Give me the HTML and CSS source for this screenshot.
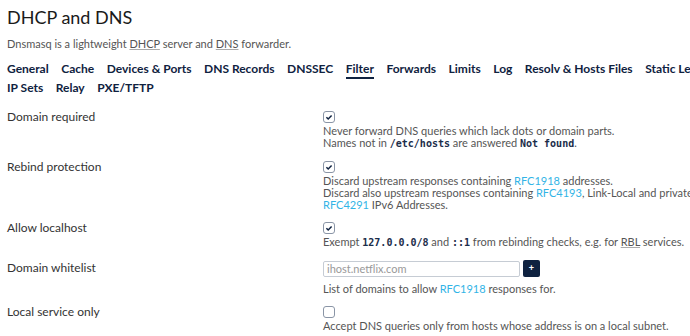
FILE: index.html
```html
<!DOCTYPE html>
<html lang="en">

<head>
    <meta charset="UTF-8">
    <title>DHCP and DNS</title>
    <link rel="stylesheet" href="styles.css">
</head>

<body>
    <div class="page">
        <h1>DHCP and DNS</h1>
        <p class="intro">Dnsmasq is a lightweight <abbr>DHCP</abbr> server and <abbr>DNS</abbr> forwarder.</p>

        <!-- Section tabs -->
        <ul class="tabs">
            <li>General</li>
            <li>Cache</li>
            <li>Devices &amp; Ports</li>
            <li>DNS Records</li>
            <li>DNSSEC</li>
            <li class="active">Filter</li>
            <li>Forwards</li>
            <li>Limits</li>
            <li>Log</li>
            <li>Resolv &amp; Hosts Files</li>
            <li>Static Leases</li>
            <li>IP Sets</li>
            <li>Relay</li>
            <li>PXE/TFTP</li>
        </ul>

        <!-- Filter options -->
        <div class="options">
            <div class="option">
                <div class="label">Domain required</div>
                <div class="field">
                    <span class="check"><svg viewBox="0 0 10 10"><path d="M2.4 5.2l1.8 1.8 3.4-3.6"/></svg></span>
                    <div class="desc">Never forward DNS queries which lack dots or domain parts.<br>Names not in <code>/etc/hosts</code> are answered <code>Not found</code>.</div>
                </div>
            </div>

            <div class="option">
                <div class="label">Rebind protection</div>
                <div class="field">
                    <span class="check"><svg viewBox="0 0 10 10"><path d="M2.4 5.2l1.8 1.8 3.4-3.6"/></svg></span>
                    <div class="desc">Discard upstream responses containing <a href="#">RFC1918</a> addresses.<br>Discard also upstream responses containing <a href="#">RFC4193</a>, Link-Local and private <a href="#">RFC4291</a> IPv6 Addresses.</div>
                </div>
            </div>

            <div class="option">
                <div class="label">Allow localhost</div>
                <div class="field">
                    <span class="check"><svg viewBox="0 0 10 10"><path d="M2.4 5.2l1.8 1.8 3.4-3.6"/></svg></span>
                    <div class="desc">Exempt <code>127.0.0.0/8</code> and <code>::1</code> from rebinding checks, e.g. for <abbr>RBL</abbr> services.</div>
                </div>
            </div>

            <div class="option">
                <div class="label input-label">Domain whitelist</div>
                <div class="field">
                    <div class="add-row">
                        <input type="text" placeholder="ihost.netflix.com">
                        <button class="add-btn">+</button>
                    </div>
                    <div class="desc">List of domains to allow <a href="#">RFC1918</a> responses for.</div>
                </div>
            </div>

            <div class="option">
                <div class="label">Local service only</div>
                <div class="field">
                    <span class="check"></span>
                    <div class="desc">Accept DNS queries only from hosts whose address is on a local subnet.</div>
                </div>
            </div>
        </div>
    </div>
</body>

</html>
```

FILE: styles.css
```css
/* Global Styles */
body {
    margin: 0;
    font-family: 'Lato', sans-serif;
    color: #333;
    background: #fff;
    overflow: hidden;
}

.page {
    width: 730px;
    padding: 0 7px;
}

h1 {
    margin: 0;
    padding-top: 5px;
    font-size: 18px;
    font-weight: 400;
    color: #1a1a1a;
    line-height: 24px;
}

.intro {
    margin: 8px 0 0;
    font-size: 11px;
    line-height: 14px;
    color: #555;
}

abbr {
    text-decoration: underline;
    text-decoration-color: #aaa;
}

/* Tabs */
.tabs {
    list-style: none;
    margin: 9px 0 0;
    padding: 0;
    display: flex;
    flex-wrap: wrap;
    column-gap: 12.5px;
}

.tabs li {
    font-size: 12px;
    font-weight: 700;
    color: #0f2240;
    line-height: 17px;
    border-bottom: 2px solid transparent;
}

.tabs li.active {
    border-bottom-color: #0f2240;
}

/* Options */
.options {
    display: flex;
    flex-direction: column;
    gap: 11px;
    margin-top: 13px;
}

.option {
    display: grid;
    grid-template-columns: 316px 1fr;
    font-size: 11px;
    line-height: 12px;
}

.label {
    font-size: 12px;
    color: #333;
}

.input-label {
    padding-top: 2px;
}

.field {
    display: flex;
    flex-direction: column;
    align-items: flex-start;
    gap: 2px;
    max-width: 385px;
}

.check {
    box-sizing: border-box;
    width: 12px;
    height: 12px;
    border: 1px solid #8a95a6;
    border-radius: 3px;
    background: #fff;
}

.check svg {
    width: 10px;
    height: 10px;
    display: block;
    fill: none;
    stroke: #0f2240;
    stroke-width: 1.5;
}

.desc {
    color: #555;
}

.desc a {
    color: #32b4e6;
    text-decoration: none;
}

code {
    font-family: 'DejaVu Sans Mono', monospace;
    font-size: 10px;
    font-weight: 700;
    color: #1b2d4a;
}

/* Domain whitelist input */
.add-row {
    display: flex;
    align-items: center;
    gap: 3px;
    margin-bottom: 4px;
}

.add-row input {
    box-sizing: border-box;
    width: 197px;
    height: 16px;
    padding: 0 3px;
    border: 1px solid #c6ccd4;
    border-radius: 2px;
    font-family: 'Lato', sans-serif;
    font-size: 11px;
    color: #555;
}

.add-row input::placeholder {
    color: #999;
}

.add-btn {
    width: 17px;
    height: 17px;
    padding: 0;
    border: none;
    border-radius: 2px;
    background: #0f2240;
    color: #fff;
    font-size: 9px;
    font-weight: 700;
    line-height: 17px;
}
```
